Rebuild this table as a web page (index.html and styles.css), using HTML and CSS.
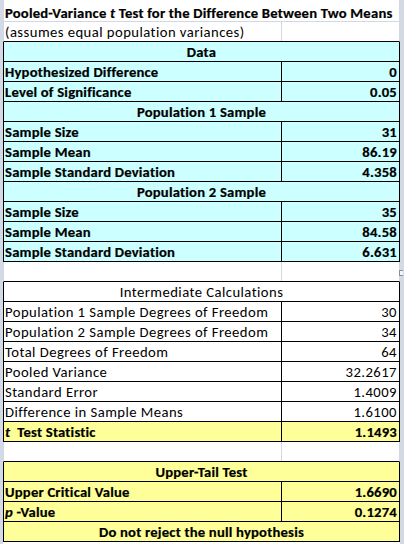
FILE: index.html
```html
<!DOCTYPE html>
<html>
<head>
<meta charset="utf-8">
<link rel="stylesheet" href="styles.css">
</head>
<body>
<div class="sheet">
  <div class="grid">
    <div class="row plain title"><div class="cell span bold">Pooled-Variance <i>t</i> Test for the Difference Between Two Means</div></div>
    <div class="row plain note"><div class="cell label">(assumes equal population variances)</div><div class="cell val"></div></div>

    <div class="row box cyan bold"><div class="cell span center">Data</div></div>
    <div class="row box cyan bold"><div class="cell label">Hypothesized Difference</div><div class="cell val">0</div></div>
    <div class="row box cyan bold"><div class="cell label">Level of Significance</div><div class="cell val">0.05</div></div>
    <div class="row box cyan bold"><div class="cell span center">Population 1 Sample</div></div>
    <div class="row box cyan bold"><div class="cell label">Sample Size</div><div class="cell val">31</div></div>
    <div class="row box cyan bold"><div class="cell label">Sample Mean</div><div class="cell val">86.19</div></div>
    <div class="row box cyan bold"><div class="cell label">Sample Standard Deviation</div><div class="cell val">4.358</div></div>
    <div class="row box cyan bold"><div class="cell span center">Population 2 Sample</div></div>
    <div class="row box cyan bold"><div class="cell label">Sample Size</div><div class="cell val">35</div></div>
    <div class="row box cyan bold"><div class="cell label">Sample Mean</div><div class="cell val">84.58</div></div>
    <div class="row box cyan bold"><div class="cell label">Sample Standard Deviation</div><div class="cell val">6.631</div></div>

    <div class="row plain blank"><div class="cell label"></div><div class="cell val"><span class="marker"></span></div></div>

    <div class="row box white"><div class="cell span center">Intermediate Calculations</div></div>
    <div class="row box white"><div class="cell label">Population 1 Sample Degrees of Freedom</div><div class="cell val">30</div></div>
    <div class="row box white"><div class="cell label">Population 2 Sample Degrees of Freedom</div><div class="cell val">34</div></div>
    <div class="row box white"><div class="cell label">Total Degrees of Freedom</div><div class="cell val">64</div></div>
    <div class="row box white"><div class="cell label">Pooled Variance</div><div class="cell val">32.2617</div></div>
    <div class="row box white"><div class="cell label">Standard Error</div><div class="cell val">1.4009</div></div>
    <div class="row box white"><div class="cell label">Difference in Sample Means</div><div class="cell val">1.6100</div></div>
    <div class="row box yellow bold"><div class="cell label"><i>t</i>&nbsp; Test Statistic</div><div class="cell val">1.1493</div></div>

    <div class="row plain blank"><div class="cell label"></div><div class="cell val"></div></div>

    <div class="row box yellow bold"><div class="cell span center">Upper-Tail Test</div></div>
    <div class="row box yellow bold"><div class="cell label">Upper Critical Value</div><div class="cell val">1.6690</div></div>
    <div class="row box yellow bold"><div class="cell label"><i>p</i> -Value</div><div class="cell val">0.1274</div></div>
    <div class="row box yellow bold"><div class="cell span center">Do not reject the null hypothesis</div></div>
  </div>
</div>
</body>
</html>
```

FILE: styles.css
```css
html, body {
  margin: 0;
  padding: 0;
  background: #ffffff;
}

.sheet {
  width: 404px;
  height: 544px;
  overflow: hidden;
  box-sizing: border-box;
  padding: 0 4px 0 3px;
  background: #d3dae5;
  font-family: Carlito, Calibri, Lato, "Liberation Sans", sans-serif;
  font-size: 14.67px;
  letter-spacing: 0.45px;
  color: #000000;
}

.grid {
  width: 397px;
  height: 544px;
  background: #ffffff;
  display: flex;
  flex-direction: column;
}

.row {
  box-sizing: border-box;
  height: 20px;
  flex: none;
  display: grid;
  grid-template-columns: 278px 117px;
  border-left: 1px solid #d0d7e5;
  border-right: 1px solid #d0d7e5;
  border-bottom: 1px solid #000000;
}

.row.title {
  height: 22px;
  padding-top: 3px;
  border-bottom-color: #d0d7e5;
}

.row.box {
  border-left-color: #000000;
  border-right-color: #000000;
}

.cyan { background: #ccffff; }
.yellow { background: #ffff99; }
.white { background: #ffffff; }

.bold {
  font-weight: bold;
  letter-spacing: 0.2px;
  -webkit-text-stroke: 0.2px #000000;
}

.cell {
  box-sizing: border-box;
  display: block;
  padding-top: 1px;
  line-height: 18px;
  height: 19px;
  white-space: nowrap;
  overflow: visible;
}

.label {
  padding-left: 1px;
  border-right: 1px solid #000000;
}

.plain .label {
  border-right-color: #d0d7e5;
}

.val {
  text-align: right;
  padding-right: 2px;
  position: relative;
}

.span {
  grid-column: 1 / 3;
  padding-left: 1px;
}

.center {
  text-align: center;
  padding-left: 0;
}

i {
  font-style: italic;
}

.marker {
  position: absolute;
  right: -4px;
  top: 8px;
  width: 3px;
  height: 4px;
  border: 1px solid #8a8f99;
  border-right: none;
  background: #f4f4f4;
}
```
